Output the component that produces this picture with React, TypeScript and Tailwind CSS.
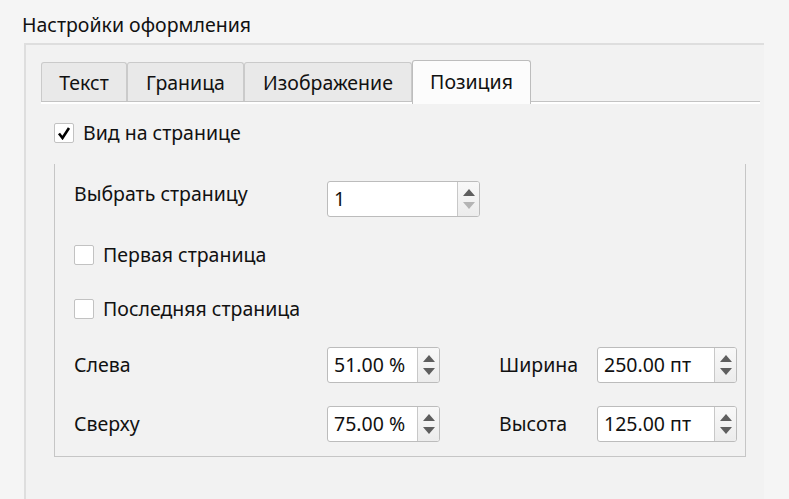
import React from 'react';

interface SpinBoxProps {
  value: string;
  width: string;
  downDisabled?: boolean;
}

function Arrow({ up, disabled }: { up?: boolean; disabled?: boolean }) {
  return (
    <svg width="12" height="7" viewBox="0 0 12 7" className="block">
      <polygon
        points={up ? '6,0 12,7 0,7' : '0,0 12,0 6,7'}
        fill={disabled ? '#b4b4b4' : '#5e5e5e'}
      />
    </svg>
  );
}

function SpinBox({ value, width, downDisabled }: SpinBoxProps) {
  return (
    <div
      className={`${width} h-[36px] flex bg-white border border-[#bcbcbc] rounded-[3px] overflow-hidden shrink-0`}
    >
      <div className="flex-1 flex items-center pl-[6px] text-[19.5px] text-[#111]">{value}</div>
      <div className="w-[22px] flex flex-col items-center justify-center gap-[6px] border-l border-[#c8c8c8] bg-gradient-to-b from-[#f8f8f8] to-[#ececec]">
        <Arrow up />
        <Arrow disabled={downDisabled} />
      </div>
    </div>
  );
}

function CheckBox({ checked, label }: { checked?: boolean; label: string }) {
  return (
    <div className="flex items-center h-[20px]">
      <div className="w-[20px] h-[20px] shrink-0 bg-white border border-[#c2c2c2] rounded-[2px] flex items-center justify-center">
        {checked && (
          <svg width="14" height="14" viewBox="0 0 14 14">
            <path d="M2 7.5 L5.5 12 L12 2" fill="none" stroke="#000" strokeWidth="2.6" strokeLinejoin="miter" />
          </svg>
        )}
      </div>
      <span className="ml-[9px] text-[19.5px] text-[#111] whitespace-nowrap">{label}</span>
    </div>
  );
}

const tabs = [
  { name: 'Текст', w: 'w-[86px]' },
  { name: 'Граница', w: 'w-[117px]' },
  { name: 'Изображение', w: 'w-[168px]' },
];

export default function App() {
  return (
    <div className="w-[789px] h-[499px] overflow-hidden bg-[#f5f5f5] font-['Noto_Sans','Open_Sans',sans-serif] text-[#111]">
      <div className="h-[43px] pl-[22px] pt-[12px] text-[19.5px] leading-[26px]">Настройки оформления</div>

      <div className="ml-[24px] w-[740px] h-[456px] bg-[#f2f2f2] border-t-2 border-l-2 border-[#dedede] pl-[15px] pt-[15px]">
        {/* Tab bar */}
        <div className="w-[719px]">
          <div className="flex items-end h-[42px] border-b border-[#c3c3c3]">
            {tabs.map((t) => (
              <div
                key={t.name}
                className={`${t.w} h-[39px] flex items-center justify-center pt-[2px] bg-[#e9e9e9] border border-b-0 border-[#cacaca] rounded-t-[3px] text-[19.5px]`}
              >
                {t.name}
              </div>
            ))}
            <div className="w-[119px] h-[44px] -mb-[3px] flex items-start justify-center pt-[9px] bg-[#fcfcfc] border border-b-0 border-[#bdbdbd] rounded-t-[3px] text-[19.5px] leading-[24px]">
              Позиция
            </div>
          </div>
          <div className="h-[2px] bg-white" />
        </div>

        {/* Content */}
        <div className="pl-[13px] pt-[19px]">
          <CheckBox checked label="Вид на странице" />

          <div className="mt-[21px] w-[692px] h-[293px] border-l border-r border-b border-[#c6c6c6] pl-[19px] pt-[17px]">
            <div className="flex items-start">
              <div className="w-[253px] text-[19.5px] leading-[26px]">Выбрать страницу</div>
              <SpinBox value="1" width="w-[153px]" downDisabled />
            </div>

            <div className="mt-[28px]">
              <CheckBox label="Первая страница" />
            </div>
            <div className="mt-[34px]">
              <CheckBox label="Последняя страница" />
            </div>

            <div className="mt-[28px] flex items-center">
              <div className="w-[253px] text-[19.5px]">Слева</div>
              <SpinBox value="51.00 %" width="w-[113px]" />
              <div className="ml-[59px] w-[98px] text-[19.5px]">Ширина</div>
              <SpinBox value="250.00 пт" width="w-[140px]" />
            </div>

            <div className="mt-[23px] flex items-center">
              <div className="w-[253px] text-[19.5px]">Сверху</div>
              <SpinBox value="75.00 %" width="w-[113px]" />
              <div className="ml-[59px] w-[98px] text-[19.5px]">Высота</div>
              <SpinBox value="125.00 пт" width="w-[140px]" />
            </div>
          </div>
        </div>
      </div>
    </div>
  );
}
